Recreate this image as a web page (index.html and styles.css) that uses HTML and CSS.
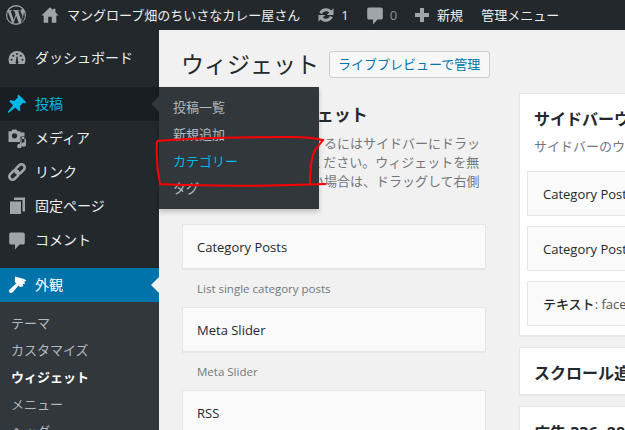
FILE: index.html
```html
<!DOCTYPE html>
<html lang="ja">
<head>
<meta charset="utf-8">
<title>ウィジェット</title>
<link rel="stylesheet" href="styles.css">
</head>
<body>
<header class="bar">
  <svg class="bar-wp" viewBox="0 0 20 20"><path fill-rule="evenodd" d="M10 0a10 10 0 1 0 0 20a10 10 0 0 0 0-20zm0 1.200a8.800 8.800 0 0 1 6.500 2.900c-1.200-.1-2 1-2 2c0 1 .6 1.700 1.100 2.600c.4.700.7 1.500.7 2.700l-1.100 3.800l-3.100-9.300l1-.1c.5 0 .4-.8-.1-.7l-2.800.2l-2.700-.2c-.5-.1-.6.7-.1.7l.9.1l1.300 3.600l-1.900 5.600l-3.100-9.200l1-.1c.5 0 .4-.8-.1-.7l-2.700.2a8.800 8.800 0 0 1 4.400-3.400a8.800 8.800 0 0 1 3.400-.7zM1.900 6.400l4.200 11.400a8.800 8.800 0 0 1-4.900-7.800c0-1.300.3-2.500.7-3.600zm16 .6a8.800 8.800 0 0 1-3.300 11.300l2.600-7.600c.5-1.300.7-2.300.7-3.200zM10.200 10.800l2.600 7.300a8.800 8.800 0 0 1-5.400.1z"/></svg>
  <span class="bar-item home">
    <svg class="bar-ic" viewBox="0 0 20 20"><path fill-rule="evenodd" d="M10 1.500L0.500 10.500h2.500v8h14v-8h2.500L16 7V3h-2.500v1.700zM8 12v6.500h4V12z"/></svg>
    <span class="bar-site">マングローブ畑のちいさなカレー屋さん</span>
  </span>
  <span class="bar-item updates">
    <svg class="bar-ic" viewBox="0 0 20 20"><path d="M10.200 3.300c2 0 3.700.8 5 2.200l2.300-2.300v6.800h-6.800l2.500-2.500a4.800 4.800 0 0 0-3-1.200c-1.900 0-3.400 1-4.100 2.600l-2.800-1.200a7.400 7.400 0 0 1 6.900-4.400zM2.500 10h6.800l-2.500 2.500a4.400 4.400 0 0 0 3 1.200c1.900 0 3.500-1.100 4.200-2.700l2.800 1.200a7.500 7.500 0 0 1-12.300 2.300l-2 2.300z"/></svg>
    <span class="bar-num">1</span>
  </span>
  <span class="bar-item comments">
    <svg class="bar-ic" viewBox="0 0 20 20"><path d="M4 2.500h12c1 0 1.800.8 1.800 1.800v8.400c0 1-.8 1.800-1.800 1.800h-3.500L8 19.500v-5H4c-1 0-1.800-.8-1.800-1.800V4.300c0-1 .8-1.800 1.800-1.800z"/></svg>
    <span class="bar-num dim">0</span>
  </span>
  <span class="bar-item new">
    <svg class="bar-ic" viewBox="0 0 20 20"><path d="M8 3h4v5h5v4h-5v5H8v-5H3V8h5z"/></svg>
    <span>新規</span>
  </span>
  <span class="bar-item admin">管理メニュー</span>
</header>

<div class="layout">
  <nav class="side">
    <ul class="menu">
      <li class="row first">
        <svg class="ic" viewBox="0 0 20 20"><path fill-rule="evenodd" d="M10 3a8.500 8.500 0 0 0-8.500 8.500c0 1.700.4 3.200 1.100 4.500h14.800c.7-1.300 1.100-2.800 1.100-4.500A8.500 8.500 0 0 0 10 3zM4.500 10.800a1 1 0 1 1 0 2a1 1 0 0 1 0-2zm1.800-4a1 1 0 1 1 0 2a1 1 0 0 1 0-2zM10 5a1 1 0 1 1 0 2a1 1 0 0 1 0-2zM13.700 6.800a1 1 0 1 1 0 2a1 1 0 0 1 0-2zM15.500 10.800a1 1 0 1 1 0 2a1 1 0 0 1 0-2zM9.500 8.500h1l.6 4.800a1.500 1.500 0 1 1-2.200 0z"/></svg>
        <span>ダッシュボード</span>
      </li>
      <li class="row hover">
        <svg class="ic" viewBox="0 0 20 20"><path d="M11.500 0.500l8 8l-1.800.8l-1.500-.5l-3.500 3.500l.8 3.700l-1.300 1.300l-3.900-3.900l-6.800 5.600l-.9-.9l5.600-6.800l-3.900-3.900l1.300-1.300l3.700.8l3.500-3.500l-.5-1.500z"/></svg>
        <span>投稿</span>
      </li>
      <li class="row">
        <svg class="ic" viewBox="0 0 20 20"><path fill-rule="evenodd" d="M5.500 1.500h4l1 1.800h3v1.200h4v4h-4V14H1.500V3.300h3zM7.500 5.200a2.600 2.600 0 1 0 0 5.200a2.600 2.600 0 0 0 0-5.200zM19 5.500v11a2.200 2.200 0 1 1-1.600-2V8h-2.800v10a2.200 2.200 0 1 1-1.600-2v-5H19z"/></svg>
        <span>メディア</span>
      </li>
      <li class="row">
        <svg class="ic link" viewBox="0 0 20 20"><g transform="rotate(-45 10 10)"><rect x="0.500" y="6.800" width="10.500" height="6.400" rx="3.200"/><rect x="9" y="6.800" width="10.500" height="6.400" rx="3.200"/></g></svg>
        <span>リンク</span>
      </li>
      <li class="row">
        <svg class="ic" viewBox="0 0 20 20"><path d="M7 1.500h11v14h-2.500V4H7zM3 5.500h11V18H3z"/></svg>
        <span>固定ページ</span>
      </li>
      <li class="row">
        <svg class="ic" viewBox="0 0 20 20"><path d="M4 2.500h12c1 0 1.800.8 1.800 1.800v8.400c0 1-.8 1.800-1.800 1.800h-3.500L8 19.500v-5H4c-1 0-1.800-.8-1.800-1.800V4.300c0-1 .8-1.800 1.800-1.800z"/></svg>
        <span>コメント</span>
      </li>
      <li class="row current">
        <svg class="ic" viewBox="0 0 20 20"><path d="M8 1.500l9 2.500l2.500 1.500l-2.500 1.500l1.500 1.500l-2.800.8l.6 2l-3.300.6l-1.500-1.500l-5.800 6.800c-.9.900-2.200.9-3 .2c-.9-.9-.9-2.200-.2-3l6.800-5.800l-1.500-1.500z"/></svg>
        <span>外観</span>
        <i class="notch"></i>
      </li>
    </ul>
    <ul class="sub">
      <li>テーマ</li>
      <li>カスタマイズ</li>
      <li class="on">ウィジェット</li>
      <li>メニュー</li>
      <li>ヘッダー</li>
    </ul>
  </nav>

  <main class="content">
    <div class="title-row">
      <h1>ウィジェット</h1>
      <a class="live">ライブプレビューで管理</a>
    </div>
    <div class="cols">
      <section class="avail">
        <h2>利用できるウィジェット</h2>
        <p class="intro">ウィジェットを有効化するにはサイドバーにドラッグするかクリックしてください。ウィジェットを無効化し設定を削除したい場合は、ドラッグして右側に戻してください。</p>
        <div class="widget">Category Posts</div>
        <p class="wdesc">List single category posts</p>
        <div class="widget">Meta Slider</div>
        <p class="wdesc">Meta Slider</p>
        <div class="widget">RSS</div>
      </section>
      <section class="areas">
        <div class="card">
          <h2>サイドバーウィジェット</h2>
          <p class="cdesc">サイドバーのウィジェットエリアです</p>
          <div class="slot">Category Posts</div>
          <div class="slot">Category Posts</div>
          <div class="slot">テキスト<span class="lite">: facebook</span></div>
        </div>
        <div class="card closed"><h2>スクロール追尾サイドバー</h2></div>
        <div class="card closed"><h2>広告 336×280</h2></div>
      </section>
    </div>
  </main>
</div>

<aside class="flyout">
  <ul>
    <li>投稿一覧</li>
    <li>新規追加</li>
    <li class="on">カテゴリー</li>
    <li>タグ</li>
  </ul>
</aside>

<svg class="scribble" viewBox="0 0 625 430"><path d="M157 141C200 137 250 137 290 137C305 137 315 138 323 140L315 150C311 158 310 170 310 184M326 184C270 186 200 186 160 184C157 170 156 155 157 141"/></svg>
</body>
</html>
```
FILE: styles.css
```css
*{box-sizing:border-box}
html,body{margin:0;padding:0;height:430px;overflow:hidden}
body{position:relative;background:#f1f1f1;color:#444;font:13px/19px "Open Sans","Noto Sans CJK JP",sans-serif}
ul{list-style:none;margin:0;padding:0}
.bar{height:30px;background:#23282d;color:#eee;display:flex;align-items:center;font-size:13px;white-space:nowrap}
.bar-wp{width:20px;height:20px;margin-left:6px;fill:#a0a5aa}
.bar-item{display:flex;align-items:center}
.bar-ic{width:20px;height:20px;fill:#a0a5aa;flex:none}
.home{margin-left:15px}
.home .bar-ic{width:18px;height:18px}
.bar-site{margin-left:8px}
.updates{margin-left:16px}
.bar-num{margin-left:5px}
.bar-num.dim{color:#8d9296}
.comments{margin-left:16px}
.new{margin-left:15px;gap:5px}
.admin{margin-left:18px}
.layout{display:flex;height:400px}
.side{width:159px;flex:none;background:#23282d;padding-top:11px;overflow:hidden}
.row{position:relative;height:34px;display:flex;align-items:center;padding:0 0 2px 7px;color:#eee;font-size:14px}
.row span{margin-left:8px}
.ic{width:20px;height:20px;fill:#a0a5aa;flex:none;margin-top:2px}
.ic.link{fill:none;stroke:#a0a5aa;stroke-width:2.600}
.row.first{margin-bottom:12px}
.row.hover{background:#191e23;color:#00b9eb}
.row.hover .ic{fill:#00b9eb}
.row.current{background:#0073aa;color:#fff;margin-top:11px}
.row.current .ic{fill:#fff}
.notch{position:absolute;right:0;top:9px;border:8px solid transparent;border-right-color:#f1f1f1;border-left-width:0}
.sub{background:#32373c;padding-top:8px;color:#b4b9be}
.sub li{height:27px;line-height:27px;padding-left:11px}
.sub li.on{color:#fff;font-weight:700}
.content{flex:1;padding-left:22px;overflow:hidden;min-width:0}
.title-row{display:flex;align-items:center;height:46px;margin-top:11px}
h1{margin:0;font-size:23px;font-weight:400;color:#23282d;line-height:46px}
.live{margin-left:10px;height:27px;line-height:25px;padding:0 9px 0 8px;border:1px solid #ccc;border-radius:3px;background:#f7f7f7;color:#0073aa;white-space:nowrap}
.cols{display:flex;gap:33px;width:600px;margin:6px 0 0 1px}
.avail{width:304px;flex:none}
.avail h2{margin:9px 0 0 -1px;font-size:17px;line-height:26px;font-weight:600;color:#23282d;white-space:nowrap}
.intro{margin:6px 0 0 -1px;color:#72777c;height:90px}
.widget{height:45px;line-height:45px;padding-left:14px;background:#fafafa;border:1px solid #e5e5e5;box-shadow:0 1px 1px rgba(0,0,0,.04);font-weight:500;color:#23282d}
.wdesc{margin:0;height:38px;line-height:39px;padding-left:15px;font-size:11.500px;color:#72777c}
.card{width:300px;background:#fff;border:1px solid #e5e5e5;box-shadow:0 1px 1px rgba(0,0,0,.04);padding:0 0 9px 7px;margin-bottom:11px;white-space:nowrap}
.areas{width:106px;flex:none;overflow:hidden}
.card h2{margin:12px 0 0 7px;font-size:16px;line-height:23px;font-weight:700;color:#23282d;padding-top:2px}
.cdesc{margin:6px 0 0 7px;line-height:19px;color:#72777c}
.slot{height:45px;line-height:45px;padding-left:15px;margin-top:10px;background:#fafafa;border:1px solid #e5e5e5;font-weight:500;color:#23282d}
.cdesc + .slot{margin-top:15px}
.lite{font-weight:400;color:#555}
.closed{height:48px;padding-bottom:0}
.closed + .closed h2{margin-top:13px}
.flyout{position:absolute;left:159px;top:87px;width:160px;height:122px;background:#32373c;box-shadow:0 3px 5px rgba(0,0,0,.2);padding-top:7px;color:#b4b9be}
.flyout:before{content:"";position:absolute;left:-8px;top:9px;border:8px solid transparent;border-right-color:#32373c;border-left-width:0}
.flyout li{height:27px;line-height:27px;padding-left:14px}
.flyout li.on{color:#00b9eb}
.scribble{position:absolute;left:0;top:0;width:625px;height:430px;fill:none;stroke:#f00;stroke-width:2;pointer-events:none}
```
